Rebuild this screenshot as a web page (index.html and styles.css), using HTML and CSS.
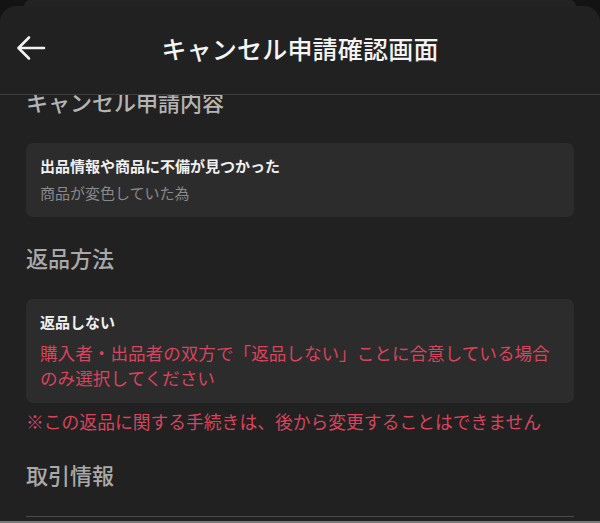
FILE: index.html
```html
<!DOCTYPE html>
<html lang="ja">
<head>
<meta charset="utf-8">
<title>キャンセル申請確認画面</title>
<link rel="stylesheet" href="styles.css">
</head>
<body>
  <div class="peek"></div>
  <div class="sheet">
    <header class="topbar">
      <button class="back" aria-label="戻る">
        <svg width="30" height="26" viewBox="0 0 30 26" fill="none" stroke="#f2f2f2" stroke-width="2.6" stroke-linecap="round" stroke-linejoin="round">
          <path d="M28 13H3"/>
          <path d="M13 2.5L2.5 13L13 23.5"/>
        </svg>
      </button>
      <h1 class="title">キャンセル申請確認画面</h1>
    </header>
    <main class="scroll">
      <div class="content">
        <h2 class="section-title first">キャンセル申請内容</h2>
        <div class="card">
          <p class="card-label">出品情報や商品に不備が見つかった</p>
          <p class="card-sub">商品が変色していた為</p>
        </div>

        <h2 class="section-title">返品方法</h2>
        <div class="card">
          <p class="card-label">返品しない</p>
          <p class="card-warn">購入者・出品者の双方で「返品しない」ことに合意している場合のみ選択してください</p>
        </div>
        <p class="note">※この返品に関する手続きは、後から変更することはできません</p>

        <h2 class="section-title">取引情報</h2>
        <div class="divider"></div>
      </div>
    </main>
    <div class="edge"></div>
  </div>
</body>
</html>
```

FILE: styles.css
```css
* {
  box-sizing: border-box;
}

html, body {
  margin: 0;
  padding: 0;
}

body {
  width: 600px;
  height: 523px;
  overflow: hidden;
  background: #131313;
  font-family: "Noto Sans CJK JP", "Noto Sans", sans-serif;
  color: #f2f2f2;
}

/* sheet stacked behind the current one */
.peek {
  height: 6px;
  margin: 0 24px;
  background: #232323;
  border-radius: 10px 10px 0 0;
}

.sheet {
  height: 517px;
  background: #212121;
  border-radius: 16px 16px 0 0;
  display: flex;
  flex-direction: column;
  overflow: hidden;
}

.topbar {
  height: 89px;
  flex: none;
  display: flex;
  align-items: center;
  justify-content: center;
  position: relative;
  border-bottom: 1px solid #3d3d3d;
  padding-bottom: 3px;
}

.back {
  position: absolute;
  left: 16px;
  top: 29px;
  width: 30px;
  height: 26px;
  padding: 0;
  border: 0;
  background: none;
  display: flex;
}

.title {
  margin: 0;
  font-size: 25px;
  font-weight: 500;
  line-height: 1;
  letter-spacing: 0.2px;
  color: #f4f4f4;
}

.scroll {
  flex: 1;
  overflow: hidden;
}

.content {
  padding: 0 26px;
}

.section-title {
  margin: 24px 0 25px;
  font-size: 22px;
  font-weight: 500;
  line-height: 33px;
  color: #a9a9a9;
}

/* the list is scrolled a little, so the first heading sits under the bar */
.section-title.first {
  margin-top: -10px;
  color: #b4b4b4;
}

.card {
  background: #2c2c2c;
  border-radius: 7px;
  padding: 12px 14px 13px;
}

.card p {
  margin: 0;
}

.card-label {
  font-size: 15px;
  font-weight: 700;
  line-height: 22px;
  color: #f0f0f0;
}

.card-sub {
  margin-top: 5px !important;
  font-size: 15px;
  line-height: 22px;
  color: #8a8a8a;
}

.card-warn {
  margin-top: 7px !important;
  font-size: 17.6px;
  line-height: 25px;
  color: #d9435c;
}

.note {
  margin: 6px 0 1px;
  font-size: 17.8px;
  line-height: 25px;
  color: #d9435c;
  white-space: nowrap;
}

.divider {
  height: 1px;
  margin-top: 23px;
  background: #4a4a4a;
}

.edge {
  height: 2px;
  flex: none;
  background: #7a7a7a;
}
```
